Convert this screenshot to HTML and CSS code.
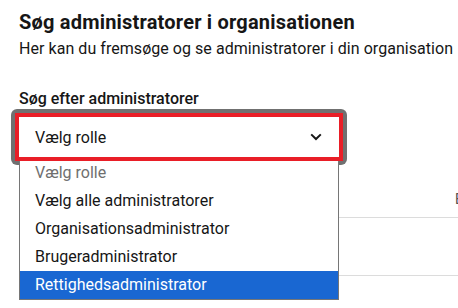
FILE: index.html
```html
<!DOCTYPE html>
<html lang="da">
<head>
<meta charset="utf-8">
<title>Søg administratorer</title>
<link rel="stylesheet" href="styles.css">
</head>
<body>
<main class="page">
  <h1 class="title">Søg administratorer i organisationen</h1>
  <p class="subtitle">Her kan du fremsøge og se administratorer i din organisation</p>
  <label class="field-label">Søg efter administratorer</label>
  <div class="select-ring">
    <div class="select-box">
      <span class="select-value">Vælg rolle</span>
      <svg class="chevron" width="12" height="8" viewBox="0 0 12 8"><path d="M1.2 1.4 L6 6 L10.8 1.4" fill="none" stroke="#161616" stroke-width="2"/></svg>
    </div>
    <ul class="options">
      <li class="option placeholder">Vælg rolle</li>
      <li class="option">Vælg alle administratorer</li>
      <li class="option">Organisationsadministrator</li>
      <li class="option">Brugeradministrator</li>
      <li class="option selected">Rettighedsadministrator</li>
    </ul>
  </div>
  <div class="table">
    <div class="table-head">
      <span class="th-spacer"></span>
      <span class="th">E-mail</span>
    </div>
    <div class="table-row"></div>
  </div>
</main>
</body>
</html>
```

FILE: styles.css
```css
html, body {
  margin: 0;
  padding: 0;
  background: #ffffff;
  overflow: hidden;
}
body {
  font-family: Roboto, "Noto Sans", sans-serif;
  color: #161616;
  width: 458px;
  height: 308px;
}
.page {
  padding: 0 0 0 19px;
}
.title {
  margin: 8px 0 0;
  font-size: 20px;
  line-height: 28px;
  font-weight: 700;
  letter-spacing: 0.2px;
  white-space: nowrap;
}
.subtitle {
  margin: 1px 0 0;
  font-size: 16px;
  line-height: 24px;
  letter-spacing: 0.05px;
  white-space: nowrap;
}
.field-label {
  display: block;
  margin: 28px 0 0;
  font-size: 16px;
  line-height: 20px;
  font-weight: 500;
}
.select-ring {
  position: relative;
  width: 328px;
  margin-left: -8px;
  padding: 4px;
  background: #707070;
  border-radius: 6px;
}
.select-box {
  position: relative;
  z-index: 2;
  height: 40px;
  border: 4px solid #e91e27;
  background: #ffffff;
  display: flex;
  align-items: center;
  justify-content: space-between;
  padding: 0 17px 0 16px;
}
.select-value {
  font-size: 16px;
}
.chevron {
  display: block;
}
.options {
  position: absolute;
  z-index: 1;
  left: 8px;
  top: 49px;
  width: 320px;
  box-sizing: border-box;
  margin: 0;
  padding: 0;
  list-style: none;
  background: #ffffff;
  border: 1px solid #767676;
}
.option {
  height: 28px;
  line-height: 28px;
  padding-left: 15px;
  font-size: 16px;
  white-space: nowrap;
}
.option.placeholder {
  color: #6f6f6f;
}
.option.selected {
  background: #1967d2;
  color: #ffffff;
}
.table {
  margin-top: 13px;
  width: 600px;
}
.table-head {
  display: grid;
  grid-template-columns: 436px auto;
  height: 40px;
  align-items: center;
  padding-top: 2px;
  box-sizing: border-box;
  border-bottom: 1px solid #dcdcdc;
  font-size: 14px;
  color: #525252;
  white-space: nowrap;
}
.table-row {
  height: 57px;
  border-bottom: 1px solid #dcdcdc;
}
```
